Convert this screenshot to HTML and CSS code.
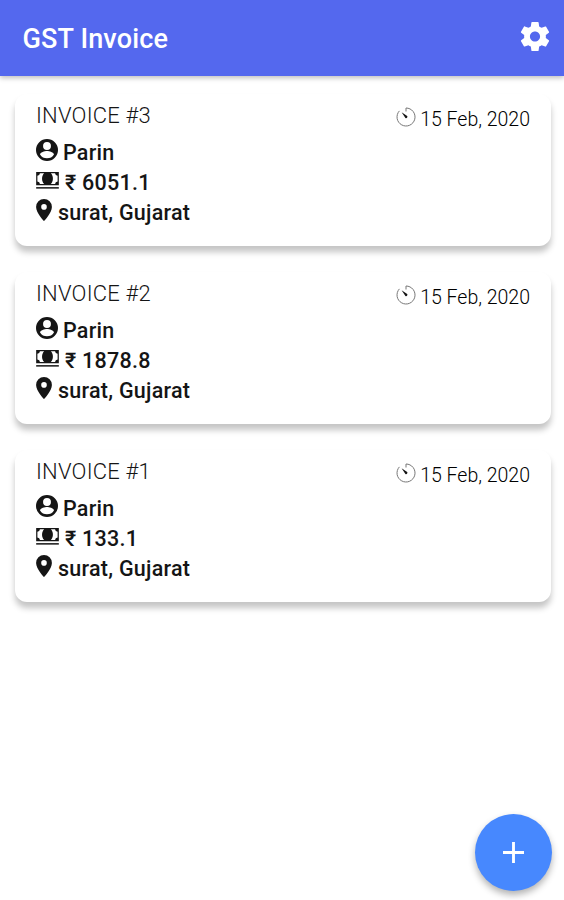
FILE: index.html
```html
<!DOCTYPE html>
<html lang="en">
<head>
    <meta charset="UTF-8">
    <meta name="viewport" content="width=device-width, initial-scale=1.0">
    <title>GST Invoice</title>
    <link rel="stylesheet" href="styles.css">
</head>
<body>
    <svg class="sprite">
        <symbol id="user" viewBox="0 0 24 24">
            <path fill-rule="evenodd" d="M12 0a12 12 0 1 0 0 24a12 12 0 0 0 0-24zM12 3.400a4.300 4.300 0 0 1 0 8.600a4.300 4.300 0 0 1 0-8.600zM12 21a9 9 0 0 1-7.600-4.200c.1-2.400 5-3.800 7.600-3.800s7.500 1.400 7.600 3.800a9 9 0 0 1-7.600 4.200z"/>
        </symbol>
        <symbol id="cash" viewBox="0 0 24 18">
            <path fill-rule="evenodd" d="M0 0h24v14H0zM4 1.300a3 3 0 0 1-2.700 2.700v6a3 3 0 0 1 2.700 2.700h4.500C5.500 10 5.500 4 8.500 1.300zM15.500 1.300c3 2.700 3 8.700 0 11.400h4.500a3 3 0 0 1 2.700-2.700V4a3 3 0 0 1-2.700-2.700z"/>
            <path d="M0 16h24v1.600H0z"/>
        </symbol>
        <symbol id="pin" viewBox="0 0 16 22">
            <path fill-rule="evenodd" d="M8 0a7.900 7.900 0 0 0-7.900 7.900C.1 13.800 8 22 8 22s7.900-8.200 7.900-14.100A7.900 7.900 0 0 0 8 0zM8 5.100a2.800 2.800 0 1 1 0 5.600a2.800 2.800 0 0 1 0-5.600z"/>
        </symbol>
        <symbol id="timer" viewBox="0 0 20 20">
            <path class="dial" d="M10 4.500V1a9 9 0 1 1-6.600 2.900"/>
            <path d="M5.600 5.200l5.600 3.900a1.300 1.300 0 0 1-1.800 1.800z"/>
        </symbol>
    </svg>

    <header class="toolbar">
        <h1>GST Invoice</h1>
        <svg class="settings" viewBox="2 2 20 20">
            <path d="M19.430 12.980c.04-.32.07-.64.07-.98s-.03-.66-.07-.98l2.110-1.650c.19-.15.24-.42.12-.64l-2-3.460c-.12-.22-.39-.3-.61-.22l-2.490 1c-.52-.4-1.080-.73-1.690-.98l-.38-2.650C14.460 2.180 14.250 2 14 2h-4c-.25 0-.46.18-.49.42l-.38 2.650c-.61.25-1.170.59-1.690.98l-2.490-1c-.23-.09-.49 0-.61.22l-2 3.460c-.13.22-.07.49.12.64l2.110 1.650c-.04.32-.07.65-.07.98s.03.66.07.98l-2.110 1.650c-.19.15-.24.42-.12.64l2 3.460c.12.22.39.3.61.22l2.490-1c.52.4 1.080.73 1.690.98l.38 2.650c.03.24.24.42.49.42h4c.25 0 .46-.18.49-.42l.38-2.650c.61-.25 1.170-.59 1.690-.98l2.490 1c.23.09.49 0 .61-.22l2-3.460c.12-.22.07-.49-.12-.64l-2.110-1.650zM12 15.500c-1.930 0-3.500-1.570-3.500-3.500s1.570-3.500 3.500-3.500 3.500 1.570 3.500 3.500-1.570 3.500-3.500 3.500z"/>
        </svg>
    </header>

    <main class="list">
        <div class="card">
            <div class="top">
                <span class="number">INVOICE #3</span>
                <span class="date"><svg class="timer"><use href="#timer"/></svg>15 Feb, 2020</span>
            </div>
            <p><svg class="user"><use href="#user"/></svg>Parin</p>
            <p><svg class="cash"><use href="#cash"/></svg>₹ 6051.1</p>
            <p><svg class="pin"><use href="#pin"/></svg>surat, Gujarat</p>
        </div>
        <div class="card">
            <div class="top">
                <span class="number">INVOICE #2</span>
                <span class="date"><svg class="timer"><use href="#timer"/></svg>15 Feb, 2020</span>
            </div>
            <p><svg class="user"><use href="#user"/></svg>Parin</p>
            <p><svg class="cash"><use href="#cash"/></svg>₹ 1878.8</p>
            <p><svg class="pin"><use href="#pin"/></svg>surat, Gujarat</p>
        </div>
        <div class="card">
            <div class="top">
                <span class="number">INVOICE #1</span>
                <span class="date"><svg class="timer"><use href="#timer"/></svg>15 Feb, 2020</span>
            </div>
            <p><svg class="user"><use href="#user"/></svg>Parin</p>
            <p><svg class="cash"><use href="#cash"/></svg>₹ 133.1</p>
            <p><svg class="pin"><use href="#pin"/></svg>surat, Gujarat</p>
        </div>
    </main>

    <button class="add">
        <svg viewBox="0 0 22 22"><path d="M11 0v22M0 11h22"/></svg>
    </button>
</body>
</html>
```
FILE: styles.css
```css
*{
    margin: 0;
    padding: 0;
    box-sizing: border-box;
}
body{
    height: 100vh;
    overflow: hidden;
    background-color: #fff;
    color: #151515;
    font-family: Roboto, "Noto Sans", sans-serif;
}
.sprite{
    display: none;
}
.toolbar{
    display: flex;
    justify-content: space-between;
    align-items: center;
    height: 76px;
    padding: 0 14px 0 22.5px;
    background-color: #5468ee;
    color: #fff;
    box-shadow: 0 2px 5px rgba(0, 0, 0, 0.25);
}
.toolbar h1{
    padding-top: 2px;
    font-size: 27px;
    font-weight: 500;
    letter-spacing: 0.15px;
}
.settings{
    width: 30px;
    height: 29px;
    margin-top: -3px;
    fill: #fff;
}
.list{
    display: flex;
    flex-direction: column;
    gap: 26px;
    padding: 18px 13px 0 15px;
}
.card{
    height: 152px;
    padding: 6px 21px 0;
    border-radius: 12px;
    background-color: #fff;
    box-shadow: 0 6px 6px rgba(0, 0, 0, 0.23);
}
.top{
    display: flex;
    justify-content: space-between;
    height: 38px;
}
.number{
    font-size: 22px;
    font-weight: 300;
    line-height: 32px;
    letter-spacing: 0.2px;
}
.date{
    display: flex;
    align-items: center;
    gap: 4px;
    height: 38px;
    color: #000;
    font-size: 19.5px;
    font-weight: 300;
}
.card p{
    display: flex;
    align-items: center;
    gap: 6px;
    height: 30px;
    padding-bottom: 2px;
    font-size: 21.5px;
    font-weight: 500;
    letter-spacing: 0.25px;
}
.card svg{
    fill: #151515;
}
.user{
    width: 22px;
    height: 22px;
    margin: -4px -1px 0 0;
}
.cash{
    width: 23px;
    height: 17px;
    margin-top: -4px;
}
.pin{
    width: 16px;
    height: 22px;
    margin-top: -4px;
}
.timer{
    width: 20px;
    height: 20px;
    margin-top: -4px;
}
.dial{
    fill: none;
    stroke: #777;
    stroke-width: 1;
}
.add{
    position: absolute;
    right: 12px;
    bottom: 9px;
    display: flex;
    justify-content: center;
    align-items: center;
    width: 77px;
    height: 77px;
    border: none;
    border-radius: 50%;
    background-color: #4788fe;
    box-shadow: 0 4px 7px rgba(0, 0, 0, 0.3);
}
.add svg{
    width: 21px;
    height: 21px;
    stroke: #fff;
    stroke-width: 3;
}
```
